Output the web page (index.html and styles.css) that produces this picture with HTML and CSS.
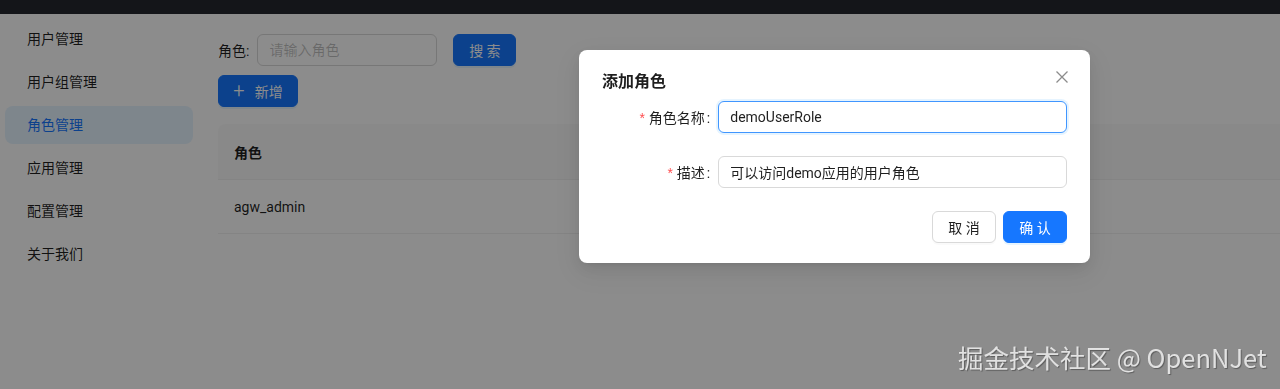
FILE: index.html
```html
<!DOCTYPE html>
<html lang="zh-CN">
<head>
    <meta charset="UTF-8">
    <meta name="viewport" content="width=device-width, initial-scale=1.0">
    <title>角色管理</title>
    <link rel="stylesheet" href="styles.css">
</head>
<body>
    <div class="layout">
        <header class="topbar"></header>
        <div class="main">
            <nav class="sidebar">
                <div class="menu-item">用户管理</div>
                <div class="menu-item">用户组管理</div>
                <div class="menu-item active">角色管理</div>
                <div class="menu-item">应用管理</div>
                <div class="menu-item">配置管理</div>
                <div class="menu-item">关于我们</div>
            </nav>
            <main class="content">
                <form class="search-form">
                    <label class="search-label">角色:</label>
                    <input class="input search-input" type="text" placeholder="请输入角色">
                    <button type="button" class="btn btn-primary search-btn">搜 索</button>
                </form>
                <button type="button" class="btn btn-primary add-btn">
                    <span class="plus">+</span>
                    <span>新增</span>
                </button>
                <table class="role-table">
                    <thead>
                        <tr><th>角色</th></tr>
                    </thead>
                    <tbody>
                        <tr><td>agw_admin</td></tr>
                    </tbody>
                </table>
            </main>
        </div>
    </div>

    <!-- Mask y diálogo -->
    <div class="mask"></div>
    <div class="modal">
        <div class="modal-header">
            <span class="modal-title">添加角色</span>
            <button type="button" class="modal-close" aria-label="close">
                <svg width="14" height="14" viewBox="0 0 14 14">
                    <path d="M1.5 1.5 L12.5 12.5 M12.5 1.5 L1.5 12.5" stroke="#8c8c8c" stroke-width="1.3" fill="none"/>
                </svg>
            </button>
        </div>
        <form class="modal-body">
            <div class="form-item">
                <label class="form-label"><span class="required">*</span>角色名称<span class="colon">:</span></label>
                <div class="form-control">
                    <input class="input input-focus" type="text" value="demoUserRole">
                </div>
            </div>
            <div class="form-item">
                <label class="form-label"><span class="required">*</span>描述<span class="colon">:</span></label>
                <div class="form-control">
                    <input class="input" type="text" value="可以访问demo应用的用户角色">
                </div>
            </div>
        </form>
        <div class="modal-footer">
            <button type="button" class="btn btn-default">取 消</button>
            <button type="button" class="btn btn-primary">确 认</button>
        </div>
    </div>

    <div class="watermark">掘金技术社区 @ OpenNJet</div>
</body>
</html>
```

FILE: styles.css
```css
/* Estilos generales */
body {
    font-family: 'Roboto', 'Noto Sans CJK SC', sans-serif;
    font-size: 14px;
    margin: 0;
    padding: 0;
    color: rgba(0, 0, 0, 0.88);
    background-color: #ffffff;
    overflow: hidden;
}

.layout {
    min-height: 100vh;
    display: flex;
    flex-direction: column;
}

.topbar {
    height: 14px;
    background-color: #25272e;
}

.main {
    display: flex;
    flex: 1;
}

/* Menú lateral */
.sidebar {
    width: 195px;
    padding-top: 6px;
    display: flex;
    flex-direction: column;
    gap: 5px;
}

.menu-item {
    height: 38px;
    line-height: 38px;
    margin-left: 5px;
    width: 188px;
    box-sizing: border-box;
    padding-left: 22px;
    border-radius: 8px;
}

.menu-item.active {
    background-color: #e6f4ff;
    color: #1677ff;
}

/* Contenido */
.content {
    flex: 1;
    padding: 20px 0 0 23px;
}

.search-form {
    display: flex;
    align-items: center;
    height: 32px;
}

.search-label {
    margin-right: 8px;
}

.input {
    font-family: inherit;
    font-size: 14px;
    height: 32px;
    box-sizing: border-box;
    padding: 4px 11px;
    border: 1px solid #d9d9d9;
    border-radius: 6px;
    color: rgba(0, 0, 0, 0.88);
    outline: none;
    width: 100%;
}

.input::placeholder {
    color: rgba(0, 0, 0, 0.25);
}

.search-input {
    width: 180px;
}

.btn {
    font-family: inherit;
    font-size: 14px;
    height: 32px;
    padding: 0;
    border-radius: 6px;
    cursor: pointer;
    white-space: nowrap;
    display: inline-flex;
    align-items: center;
    justify-content: center;
}

.btn-primary {
    background-color: #1677ff;
    border: 1px solid #1677ff;
    color: #ffffff;
    box-shadow: 0 2px 0 rgba(5, 145, 255, 0.1);
}

.btn-default {
    background-color: #ffffff;
    border: 1px solid #d9d9d9;
    color: rgba(0, 0, 0, 0.88);
    box-shadow: 0 2px 0 rgba(0, 0, 0, 0.02);
}

.search-btn {
    margin-left: 16px;
    width: 63px;
}

.add-btn {
    margin-top: 9px;
    width: 80px;
    gap: 10px;
}

.plus {
    font-size: 20px;
    font-weight: 300;
    line-height: 1;
    margin-top: -2px;
}

.role-table {
    width: 100%;
    margin-top: 17px;
    border-collapse: separate;
    border-spacing: 0;
}

.role-table th,
.role-table td {
    text-align: left;
    padding: 0 16px;
    border-bottom: 1px solid #f0f0f0;
}

.role-table th {
    height: 55px;
    background-color: #fafafa;
    font-weight: 600;
    border-top-left-radius: 8px;
}

.role-table td {
    height: 53px;
}

/* Máscara */
.mask {
    position: fixed;
    inset: 0;
    background-color: rgba(0, 0, 0, 0.45);
}

/* Diálogo */
.modal {
    position: fixed;
    top: 50px;
    left: 579px;
    width: 511px;
    box-sizing: border-box;
    padding: 20px 23px 20px 23px;
    background-color: #ffffff;
    border-radius: 8px;
    box-shadow: 0 6px 16px 0 rgba(0, 0, 0, 0.08), 0 3px 6px -4px rgba(0, 0, 0, 0.12), 0 9px 28px 8px rgba(0, 0, 0, 0.05);
}

.modal-header {
    margin-bottom: 7px;
}

.modal-title {
    font-size: 16px;
    font-weight: 600;
    line-height: 24px;
}

.modal-close {
    position: absolute;
    top: 16px;
    right: 17px;
    width: 22px;
    height: 22px;
    padding: 0;
    border: none;
    background: none;
    display: flex;
    align-items: center;
    justify-content: center;
}

.form-item {
    display: flex;
    align-items: center;
    margin-bottom: 23px;
}

.form-label {
    width: 25%;
    text-align: right;
    white-space: nowrap;
}

.required {
    color: #ff4d4f;
    margin-right: 4px;
    font-family: 'Liberation Sans', sans-serif;
}

.colon {
    margin: 0 8px 0 2px;
}

.form-control {
    flex: 1;
}

.input-focus {
    border-color: #4096ff;
    box-shadow: 0 0 0 2px rgba(5, 145, 255, 0.1);
}

.modal-footer {
    display: flex;
    justify-content: flex-end;
    gap: 7px;
    margin-top: 1px;
}

.modal-footer .btn {
    width: 64px;
}

/* Marca de agua */
.watermark {
    position: fixed;
    left: 958px;
    top: 339px;
    font-family: 'Noto Sans CJK SC', sans-serif;
    font-size: 25.5px;
    line-height: 36px;
    color: rgba(240, 240, 240, 0.88);
    text-shadow: 1px 1px 1px rgba(0, 0, 0, 0.35);
    white-space: nowrap;
}
```
